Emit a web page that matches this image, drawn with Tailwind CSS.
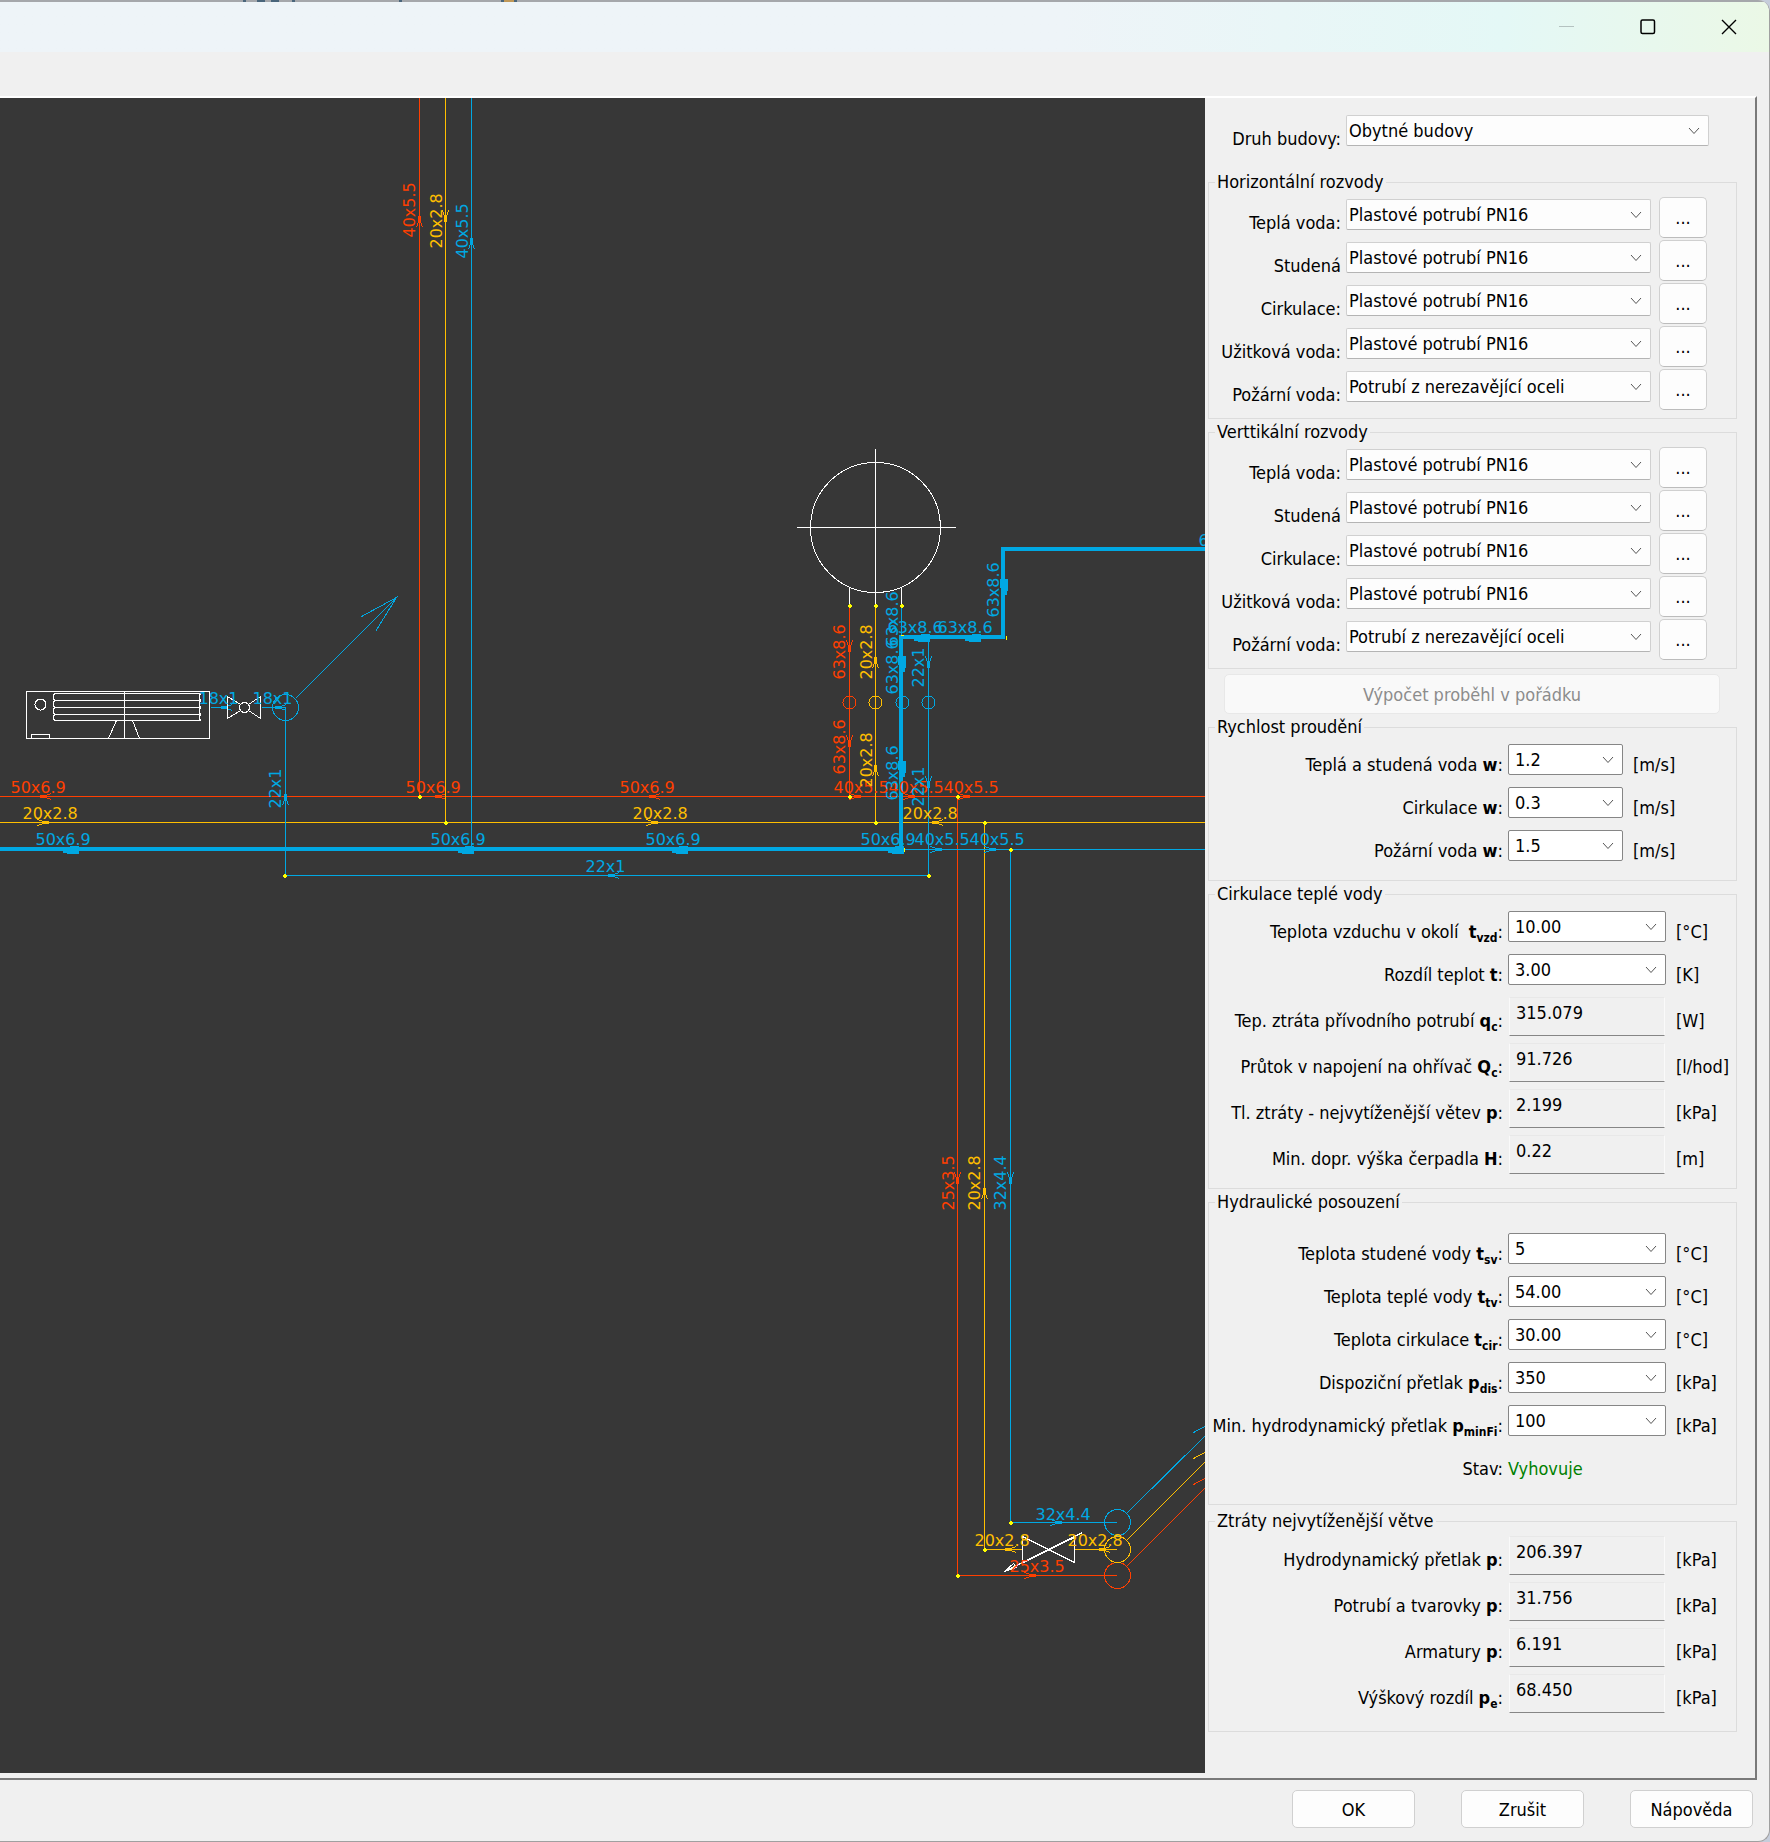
<!DOCTYPE html>
<html lang="cs">
<head>
    <meta charset="UTF-8">
    <meta name="viewport" content="width=device-width, initial-scale=1.0">
    <title>Dimenzování vodovodu</title>
    <script src="https://cdn.jsdelivr.net/npm/@tailwindcss/browser@4"></script>
</head>
<body class="bg-[#c6cddb] font-['DejaVu_Sans_Condensed','DejaVu_Sans',sans-serif] text-[18px] text-black">
    <div class="min-h-screen flex flex-col bg-[#f0f0f0] border-r border-b border-[#a0a0a0] rounded-r-xl overflow-hidden">
        <!-- Sliver of the window behind -->
        <svg class="block w-full h-[2px] bg-[#a5a7ab] shrink-0" shape-rendering="crispEdges" aria-hidden="true">
            <path d="M243 0h3v2h-3zM257 0h8v2h-8zM271 0h8v2h-8zM292 0h3v2h-3zM399 0h3v2h-3zM501 0h3v2h-3zM514 0h3v2h-3z" fill="#4a657b"/>
            <path d="M504 0h10v2h-10z" fill="#c09858"/>
        </svg>

        <header class="h-[50px] shrink-0 flex justify-end bg-linear-to-r from-[#eef4f8] from-60% via-[#e4f8f6] via-85% to-[#ebf8e6]">
            <button type="button" aria-label="Minimalizovat" class="w-[81px] flex items-center justify-center">
                <svg width="16" height="16" stroke="#b4c2c0" shape-rendering="crispEdges"><path d="M0 7.500h15"/></svg>
            </button>
            <button type="button" aria-label="Maximalizovat" class="w-[81px] flex items-center justify-center">
                <svg width="16" height="16" fill="none" stroke="#000" stroke-width="1.500"><rect x="1" y="1" width="13.500" height="13.500" rx="1.500"/></svg>
            </button>
            <button type="button" aria-label="Zavřít" class="w-[81px] flex items-center justify-center">
                <svg width="16" height="16" stroke="#000" stroke-width="1.400"><path d="M1 1l14 14M15 1L1 15"/></svg>
            </button>
        </header>

        <main class="flex-1 flex mt-11 mr-3 border-t-2 border-t-white border-r-2 border-r-[#7a7a7a] border-b-2 border-b-[#7a7a7a]">
            <!-- Pipe network drawing -->
            <svg class="flex-1 min-w-0 self-stretch h-auto mb-[5px] bg-[#373737] overflow-hidden font-['DejaVu_Sans',sans-serif] text-[16px]" role="img" aria-label="Schéma potrubí">
                <defs>
                    <g id="a">
                        <path d="M-1 0h2v5h-2z"/>
                        <path d="M-1 5l-2 6M1 5l2 6" fill="none"/>
                    </g>
                    <path id="b" d="M-3 0H0V7H3V15H-4V7z"/>
                    <path id="d" d="M-1 -2h2v1h1v2h-1v1h-2v-1h-1v-2h1z"/>
                </defs>
                <g transform="translate(0.500 -97.500)">
                    <g stroke="#ff3f00" fill="none" shape-rendering="crispEdges">
                        <path d="M419 97V796M-1 796H1210M849 605V796M957 796V1575H1116M1126 1566L1206 1486M1193 1484L1206 1477"/>
                        <circle cx="849" cy="702" r="6.500"/>
                        <circle cx="1117" cy="1575" r="13"/>
                        <g fill="#ff3f00">
                            <use href="#a" transform="translate(419 216)"/>
                            <use href="#a" transform="translate(849 651) rotate(180)"/>
                            <use href="#a" transform="translate(849 746) rotate(180)"/>
                            <use href="#a" transform="translate(957 1183) rotate(180)"/>
                            <use href="#a" transform="translate(40 796) rotate(-90)"/>
                            <use href="#a" transform="translate(435 796) rotate(-90)"/>
                            <use href="#a" transform="translate(649 796) rotate(-90)"/>
                            <use href="#a" transform="translate(860 796) rotate(90)"/>
                            <use href="#a" transform="translate(914 796) rotate(90)"/>
                            <use href="#a" transform="translate(969 796) rotate(90)"/>
                            <use href="#a" transform="translate(1035 1575) rotate(90)"/>
                        </g>
                    </g>
                    <g stroke="#ffbf00" fill="none" shape-rendering="crispEdges">
                        <path d="M445 97V822M-1 822H1210M875 605V822M984 822V1549H1022M1074 1549H1116M1126 1540L1206 1460M1193 1458L1206 1451"/>
                        <circle cx="875" cy="702" r="6.500"/>
                        <circle cx="1117" cy="1549" r="13"/>
                        <g fill="#ffbf00">
                            <use href="#a" transform="translate(445 221) rotate(180)"/>
                            <use href="#a" transform="translate(875 657)"/>
                            <use href="#a" transform="translate(875 765)"/>
                            <use href="#a" transform="translate(984 1188)"/>
                            <use href="#a" transform="translate(48 822) rotate(90)"/>
                            <use href="#a" transform="translate(657 822) rotate(90)"/>
                            <use href="#a" transform="translate(932 822) rotate(-90)"/>
                            <use href="#a" transform="translate(1005 1549) rotate(-90)"/>
                            <use href="#a" transform="translate(1099 1549) rotate(-90)"/>
                        </g>
                    </g>
                    <g stroke="#00a8e3" fill="none" shape-rendering="crispEdges">
                        <path d="M471 97V849M285 707V875H928V639M901 605V636M903 849H1210M1010 849V1522H1116M210 707H227M261 707H285"/>
                        <path d="M295 698L396 597M361 616L396 597L375 631M1126 1513L1206 1434M1193 1432L1206 1425"/>
                        <path d="M-1 848.500H900.500V636.500H1002.500V548.500H1210" stroke-width="4"/>
                        <circle cx="285" cy="707" r="13"/>
                        <circle cx="902" cy="702" r="6.500"/>
                        <circle cx="928" cy="702" r="6.500"/>
                        <circle cx="1117" cy="1522" r="13"/>
                        <g fill="#00a8e3">
                            <use href="#a" transform="translate(471 238)"/>
                            <use href="#a" transform="translate(285 794)"/>
                            <use href="#a" transform="translate(221 707) rotate(-90)"/>
                            <use href="#a" transform="translate(275 707) rotate(-90)"/>
                            <use href="#a" transform="translate(608 875) rotate(-90)"/>
                            <use href="#a" transform="translate(928 667) rotate(180)"/>
                            <use href="#a" transform="translate(928 787) rotate(180)"/>
                            <use href="#a" transform="translate(941 849) rotate(90)"/>
                            <use href="#a" transform="translate(995 849) rotate(90)"/>
                            <use href="#a" transform="translate(1010 1183) rotate(180)"/>
                            <use href="#a" transform="translate(1061 1522) rotate(90)"/>
                            <use href="#b" transform="translate(63 849) rotate(-90)"/>
                            <use href="#b" transform="translate(458 849) rotate(-90)"/>
                            <use href="#b" transform="translate(672 849) rotate(-90)"/>
                            <use href="#b" transform="translate(888 849) rotate(-90)"/>
                            <use href="#b" transform="translate(914 637) rotate(-90)"/>
                            <use href="#b" transform="translate(965 637) rotate(-90)"/>
                            <use href="#b" transform="translate(901 671) rotate(180)"/>
                            <use href="#b" transform="translate(901 776) rotate(180)"/>
                            <use href="#b" transform="translate(1003 594) rotate(180)"/>
                        </g>
                    </g>

                    <!-- Boiler, fan coil and valves -->
                    <g stroke="#fff" fill="none" shape-rendering="crispEdges">
                        <circle cx="875" cy="527" r="65"/>
                        <path d="M796 527H955M875 448V604M849 587V604M901 587V604"/>
                        <path d="M26 691H209V738H26zM31 738V734H49V738M124 691V738M116 720L108 738M132 720L139 738"/>
                        <path d="M54 693H200L199 695V698L200 700L199 702V705L200 707L199 709V712L200 714L199 716V718L200 720H54L53 718V716L54 714L53 712V709L54 707L53 705V702L54 700L53 698V695zM54 700H200M54 707H200M54 714H200"/>
                        <circle cx="40" cy="704" r="5.500"/>
                        <path d="M240 704L227 696V718L240 710M248 704L260 696V718L248 710"/>
                        <circle cx="244" cy="707" r="5"/>
                        <path d="M1022 1562V1536L1074 1562V1536L1022 1562M1023 1562L1074 1537M1082 1532L1004 1571L1013 1563L1016 1567L1004 1571"/>
                    </g>

                    <g fill="#ff0" shape-rendering="crispEdges">
                        <use href="#d" x="419" y="796"/>
                        <use href="#d" x="445" y="822"/>
                        <use href="#d" x="284" y="875"/>
                        <use href="#d" x="849" y="605"/>
                        <use href="#d" x="875" y="605"/>
                        <use href="#d" x="901" y="605"/>
                        <use href="#d" x="849" y="796"/>
                        <use href="#d" x="875" y="822"/>
                        <use href="#d" x="957" y="796"/>
                        <use href="#d" x="984" y="822"/>
                        <use href="#d" x="1010" y="849"/>
                        <use href="#d" x="928" y="875"/>
                        <use href="#d" x="957" y="1575"/>
                        <use href="#d" x="984" y="1549"/>
                        <use href="#d" x="1010" y="1522"/>
                        <path d="M1005 635h1v4h-1zM903 847h1v4h-1zM900 634h3v1h-3z"/>
                    </g>

                    <g fill="#ff3f00">
                        <text transform="translate(414 237) rotate(-90)">40x5.5</text>
                        <text transform="translate(844 679) rotate(-90)">63x8.6</text>
                        <text transform="translate(844 774) rotate(-90)">63x8.6</text>
                        <text transform="translate(953 1210) rotate(-90)">25x3.5</text>
                        <text x="10" y="792">50x6.9</text>
                        <text x="405" y="792">50x6.9</text>
                        <text x="619" y="792">50x6.9</text>
                        <text x="833" y="792">40x5.5</text>
                        <text x="888" y="792">40x5.5</text>
                        <text x="943" y="792">40x5.5</text>
                        <text x="1009" y="1571">25x3.5</text>
                    </g>
                    <g fill="#ffbf00">
                        <text transform="translate(441 248) rotate(-90)">20x2.8</text>
                        <text transform="translate(871 679) rotate(-90)">20x2.8</text>
                        <text transform="translate(871 787) rotate(-90)">20x2.8</text>
                        <text transform="translate(979 1210) rotate(-90)">20x2.8</text>
                        <text x="22" y="818">20x2.8</text>
                        <text x="632" y="818">20x2.8</text>
                        <text x="902" y="818">20x2.8</text>
                        <text x="974" y="1545">20x2.8</text>
                        <text x="1067" y="1545">20x2.8</text>
                    </g>
                    <g fill="#00a8e3">
                        <text transform="translate(467 258) rotate(-90)">40x5.5</text>
                        <text transform="translate(280 808) rotate(-90)">22x1</text>
                        <text transform="translate(897 646) rotate(-90)">63x8.6</text>
                        <text transform="translate(897 694) rotate(-90)">63x8.6</text>
                        <text transform="translate(897 800) rotate(-90)">63x8.6</text>
                        <text transform="translate(923 687) rotate(-90)">22x1</text>
                        <text transform="translate(923 806) rotate(-90)">22x1</text>
                        <text transform="translate(998 617) rotate(-90)">63x8.6</text>
                        <text transform="translate(1005 1210) rotate(-90)">32x4.4</text>
                        <text x="198" y="703">18x1</text>
                        <text x="252" y="703">18x1</text>
                        <text x="35" y="844">50x6.9</text>
                        <text x="430" y="844">50x6.9</text>
                        <text x="645" y="844">50x6.9</text>
                        <text x="860" y="844">50x6.9</text>
                        <text x="914" y="844">40x5.5</text>
                        <text x="969" y="844">40x5.5</text>
                        <text x="585" y="871">22x1</text>
                        <text x="887" y="632">63x8.6</text>
                        <text x="937" y="632">63x8.6</text>
                        <text x="1198" y="545">6</text>
                        <text x="1035" y="1519">32x4.4</text>
                    </g>
                </g>
            </svg>

            <form class="w-[550px] shrink-0 flex flex-col pt-[17px] pl-[3px] pr-[18px]">
                <div class="flex pl-px gap-[5px] mb-[18px]">
                    <label for="druh" class="w-[132px] text-right leading-[31px] pt-2">Druh budovy:</label>
                    <div class="grid h-[31px]">
                        <select id="druh" class="col-start-1 row-start-1 w-[363px] h-[31px] appearance-none bg-[#fdfdfd] border border-[#d0d0d0] border-b-[#b4b4b4] rounded-xs pl-[2px]"><option>Obytné budovy</option></select>
                        <svg class="col-start-1 row-start-1 self-center justify-self-end mr-[9px] pointer-events-none" width="12" height="8" fill="none" stroke="#555"><path d="M1 1l5 5.500l5 -5.500"/></svg>
                    </div>
                </div>

                <fieldset class="border border-[#dcdcdc] pt-[5px] pb-[6px]">
                    <legend class="ml-[6px] px-[2px] leading-5">Horizontální rozvody</legend>
                    <div id="horizontal"></div>
                </fieldset>

                <fieldset class="border border-[#dcdcdc] pt-[5px] pb-[6px] mt-[3px]">
                    <legend class="ml-[6px] px-[2px] leading-5">Verttikální rozvody</legend>
                    <div id="vertical"></div>
                </fieldset>

                <button type="button" disabled class="h-10 mt-[5px] ml-4 mr-[17px] bg-[#f9f9f9] border border-[#e8e8e8] rounded-[5px] text-[#8c8c8c]">Výpočet proběhl v pořádku</button>

                <fieldset class="border border-[#dcdcdc] py-[7px] mt-[3px]">
                    <legend class="ml-[6px] px-[2px] leading-5">Rychlost proudění</legend>
                    <div id="speed"></div>
                </fieldset>

                <fieldset class="border border-[#dcdcdc] py-[7px] mt-[3px]">
                    <legend class="ml-[6px] px-[2px] leading-5">Cirkulace teplé vody</legend>
                    <div id="circulation"></div>
                </fieldset>

                <fieldset class="border border-[#dcdcdc] pt-[21px] pb-[13px] mt-[3px]">
                    <legend class="ml-[6px] px-[2px] leading-5">Hydraulické posouzení</legend>
                    <div id="hydraulic"></div>
                    <div class="h-[43px] flex gap-[5px] leading-[31px] pt-[5px]">
                        <span class="w-[294px] text-right">Stav:</span>
                        <output class="text-[#008000]">Vyhovuje</output>
                    </div>
                </fieldset>

                <fieldset class="border border-[#dcdcdc] pt-[5px] pb-[11px] mt-[6px]">
                    <legend class="ml-[6px] px-[2px] leading-5">Ztráty nejvytíženější větve</legend>
                    <div id="losses"></div>
                </fieldset>
            </form>
        </main>

        <footer class="shrink-0 flex justify-end gap-[46px] pt-[10px] pb-[13px] pr-4">
            <button type="button" class="w-[123px] h-[38px] bg-[#fdfdfd] border border-[#d0d0d0] rounded-[5px]">OK</button>
            <button type="button" class="w-[123px] h-[38px] bg-[#fdfdfd] border border-[#d0d0d0] rounded-[5px]">Zrušit</button>
            <button type="button" class="w-[123px] h-[38px] bg-[#fdfdfd] border border-[#d0d0d0] rounded-[5px]">Nápověda</button>
        </footer>
    </div>

    <script>
        const plastic = 'Plastové potrubí PN16';
        const steel = 'Potrubí z nerezavějící oceli';
        const pipes = [
            ['Teplá voda:', plastic],
            ['Studená', plastic],
            ['Cirkulace:', plastic],
            ['Užitková voda:', plastic],
            ['Požární voda:', steel],
        ];

        // name, symbol, subscript, value, unit, read only
        const groups = {
            speed: [
                ['Teplá a studená voda', 'w', '', '1.2', '[m/s]'],
                ['Cirkulace', 'w', '', '0.3', '[m/s]'],
                ['Požární voda', 'w', '', '1.5', '[m/s]'],
            ],
            circulation: [
                ['Teplota vzduchu v okolí&nbsp;', 't', 'vzd', '10.00', '[°C]'],
                ['Rozdíl teplot', 't', '', '3.00', '[K]'],
                ['Tep. ztráta přívodního potrubí', 'q', 'c', '315.079', '[W]', true],
                ['Průtok v napojení na ohřívač', 'Q', 'c', '91.726', '[l/hod]', true],
                ['Tl. ztráty - nejvytíženější větev', 'p', '', '2.199', '[kPa]', true],
                ['Min. dopr. výška čerpadla', 'H', '', '0.22', '[m]', true],
            ],
            hydraulic: [
                ['Teplota studené vody', 't', 'sv', '5', '[°C]'],
                ['Teplota teplé vody', 't', 'tv', '54.00', '[°C]'],
                ['Teplota cirkulace', 't', 'cir', '30.00', '[°C]'],
                ['Dispoziční přetlak', 'p', 'dis', '350', '[kPa]'],
                ['Min. hydrodynamický přetlak', 'p', 'minFi', '100', '[kPa]'],
            ],
            losses: [
                ['Hydrodynamický přetlak', 'p', '', '206.397', '[kPa]', true],
                ['Potrubí a tvarovky', 'p', '', '31.756', '[kPa]', true],
                ['Armatury', 'p', '', '6.191', '[kPa]', true],
                ['Výškový rozdíl', 'p', 'e', '68.450', '[kPa]', true],
            ],
        };

        const chevron = '<svg class="col-start-1 row-start-1 self-center justify-self-end mr-[9px] pointer-events-none" width="12" height="8" fill="none" stroke="#555"><path d="M1 1l5 5.500l5 -5.500"/></svg>';

        function pipeRow(group, [name, value], i) {
            const id = `${group}-${i}`;
            return `
                <div class="flex h-[43px] gap-[5px]">
                    <label for="${id}" class="w-[132px] text-right leading-[31px] pt-2.5">${name}</label>
                    <div class="grid h-[31px] mt-[2px]">
                        <select id="${id}" class="col-start-1 row-start-1 w-[305px] h-[31px] appearance-none bg-[#fdfdfd] border border-[#d0d0d0] border-b-[#b4b4b4] rounded-xs pl-[2px]"><option>${value}</option></select>
                        ${chevron}
                    </div>
                    <button type="button" class="w-12 h-[41px] ml-[3px] bg-[#fdfdfd] border border-[#d0d0d0] border-b-[#bcbcbc] rounded-[5px]">...</button>
                </div>`;
        }

        function valueRow(group, [name, symbol, sub, value, unit, readOnly], i) {
            const id = `${group}-${i}`;
            const width = group === 'speed' ? 'w-[115px]' : 'w-[158px]';
            const control = readOnly
                ? `<div class="w-[158px] px-px"><input id="${id}" readonly value="${value}" class="block w-full h-[39px] pl-[6px] pb-[8px] bg-[#f0f0f0] border border-t-[#e8e8e8] border-x-[#fafafa] border-b-[#868686]"></div>`
                : `<div class="grid h-[31px]">
                        <select id="${id}" class="col-start-1 row-start-1 ${width} h-[31px] appearance-none bg-white border border-[#868686] rounded-xs pl-[6px]"><option>${value}</option></select>
                        ${chevron}
                    </div>`;
            const text = readOnly ? 'leading-[31px] pt-2' : 'leading-[31px] pt-[5px]';
            return `
                <div class="flex gap-[5px] ${readOnly ? 'h-[46px]' : 'h-[43px]'}">
                    <label for="${id}" class="w-[294px] flex justify-end whitespace-nowrap ${text}"><span>${name} <b>${symbol}<sub class="text-[12px] -bottom-1">${sub}</sub></b>:</span></label>
                    ${control}
                    <span class="ml-[5px] ${text}">${unit}</span>
                </div>`;
        }

        ['horizontal', 'vertical'].forEach(group => {
            document.getElementById(group).innerHTML = pipes.map((row, i) => pipeRow(group, row, i)).join('');
        });
        Object.keys(groups).forEach(group => {
            document.getElementById(group).innerHTML = groups[group].map((row, i) => valueRow(group, row, i)).join('');
        });
    </script>
</body>
</html>
